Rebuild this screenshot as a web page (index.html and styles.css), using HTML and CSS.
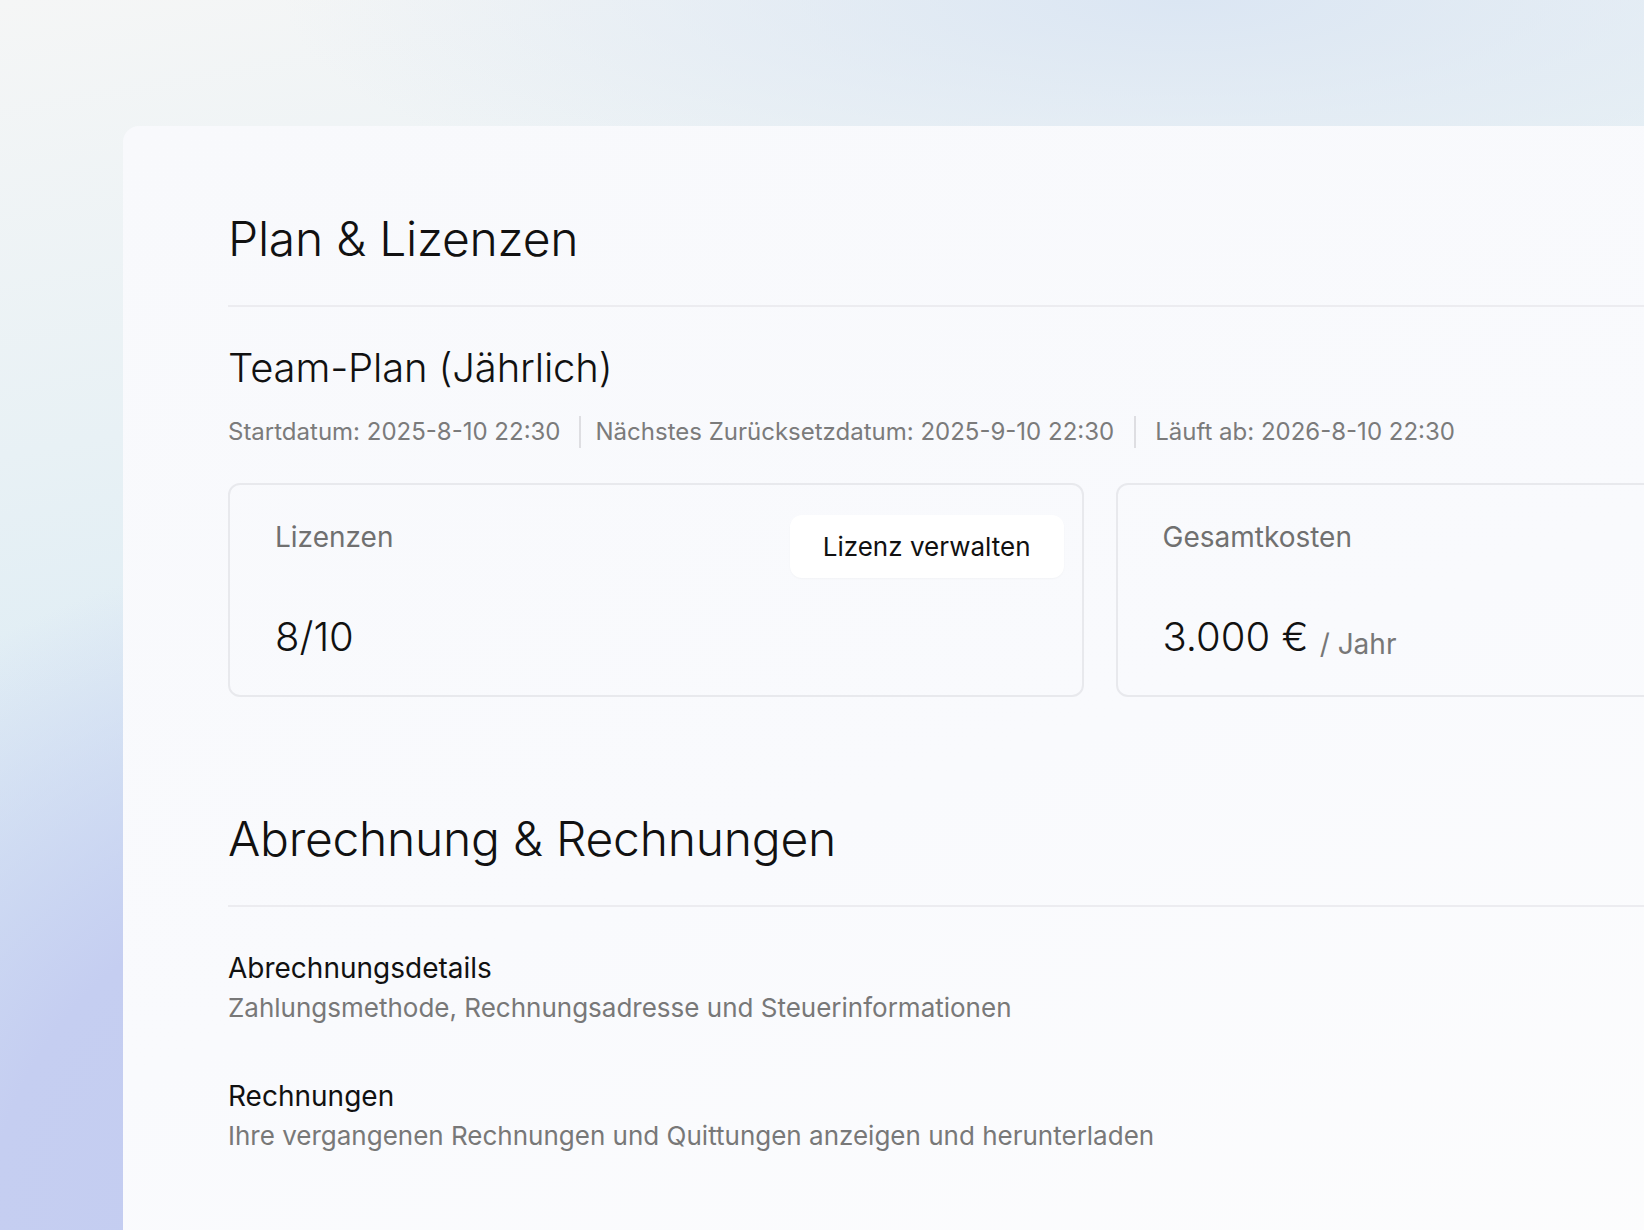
FILE: index.html
```html
<!DOCTYPE html>
<html lang="de">
<head>
<meta charset="UTF-8">
<meta name="viewport" content="width=device-width, initial-scale=1.0">
<title>Plan &amp; Lizenzen</title>
<link rel="stylesheet" href="styles.css">
</head>
<body>
<main class="panel">
    <section class="section">
        <h1 class="section-title">Plan &amp; Lizenzen</h1>
        <div class="plan">
            <h2 class="plan-name">Team-Plan (Jährlich)</h2>
            <ul class="plan-meta">
                <li>Startdatum: 2025-8-10 22:30</li>
                <li>Nächstes Zurücksetzdatum: 2025-9-10 22:30</li>
                <li>Läuft ab: 2026-8-10 22:30</li>
            </ul>
            <div class="stats">
                <div class="stat">
                    <div class="stat-head">
                        <span class="stat-label">Lizenzen</span>
                        <button class="btn">Lizenz verwalten</button>
                    </div>
                    <div class="stat-value">8/10</div>
                </div>
                <div class="stat">
                    <div class="stat-head">
                        <span class="stat-label">Gesamtkosten</span>
                    </div>
                    <div class="stat-value">3.000 € <span class="stat-unit">/ Jahr</span></div>
                </div>
            </div>
        </div>
    </section>

    <section class="section billing">
        <h1 class="section-title">Abrechnung &amp; Rechnungen</h1>
        <div class="billing-list">
            <div class="billing-item">
                <div class="billing-title">Abrechnungsdetails</div>
                <div class="billing-desc">Zahlungsmethode, Rechnungsadresse und Steuerinformationen</div>
            </div>
            <div class="billing-item">
                <div class="billing-title">Rechnungen</div>
                <div class="billing-desc">Ihre vergangenen Rechnungen und Quittungen anzeigen und herunterladen</div>
            </div>
        </div>
    </section>
</main>
</body>
</html>
```

FILE: styles.css
```css
html, body {
    height: 100%;
}
body {
    margin: 0;
    overflow: hidden;
    font-family: Inter, "Noto Sans", Arial, sans-serif;
    color: #141414;
    background:
        radial-gradient(ellipse 700px 680px at 340px 100%, #c3ccf1 0%, #c5cef1 50%, rgba(197,206,241,0) 100%),
        radial-gradient(ellipse 900px 240px at 72% 0%, #dbe6f3 0%, rgba(219,230,243,0) 100%),
        linear-gradient(170deg, #f5f6f6 0%, #e8f1f5 30%, #d9eaf4 60%, #d3e4f4 100%);
}
.panel {
    box-sizing: border-box;
    width: 1954px;
    height: 1200px;
    margin: 126px 0 0 123px;
    padding: 84px 106px 0 105px;
    background: linear-gradient(160deg, #f8f9fc 0%, #f9fafd 50%, #fdfdfd 100%);
    border-radius: 16px;
}
.section-title {
    margin: 0;
    padding-bottom: 37px;
    border-bottom: 2px solid #ececf0;
    font-size: 48px;
    line-height: 58px;
    font-weight: 300;
    letter-spacing: -0.25px;
    color: #111;
}
.plan {
    padding-top: 37px;
}
.plan-name {
    margin: 0;
    font-size: 40px;
    line-height: 48px;
    font-weight: 300;
    letter-spacing: -0.15px;
    color: #111;
}
.plan-meta {
    display: flex;
    margin: 24px 0 0;
    padding: 0;
    list-style: none;
    font-size: 24px;
    line-height: 32px;
    color: #7b7b7b;
}
.plan-meta li + li {
    margin-left: 18px;
    padding-left: 15px;
    border-left: 2px solid #dedee2;
}
.plan-meta li:last-child {
    margin-left: 20px;
    padding-left: 19px;
}
.stats {
    display: grid;
    grid-template-columns: 1fr 1fr;
    gap: 32px;
    margin-top: 35px;
}
.stat {
    box-sizing: border-box;
    display: flex;
    flex-direction: column;
    min-height: 214px;
    padding: 30px 18px 34px 45px;
    border: 2px solid #e8e9ed;
    border-radius: 12px;
}
.stat-head {
    display: flex;
    justify-content: space-between;
    align-items: flex-start;
}
.stat-label {
    margin-top: 1px;
    font-size: 28px;
    line-height: 42px;
    color: #707070;
}
.btn {
    padding: 12px 33px;
    border: none;
    border-radius: 12px;
    background-color: #fff;
    box-shadow: 0 1px 2px rgba(0,0,0,0.03);
    font-family: inherit;
    font-size: 26px;
    line-height: 39px;
    color: #111;
    cursor: pointer;
}
.stat-value {
    display: flex;
    align-items: flex-end;
    margin-top: auto;
    font-size: 40px;
    line-height: 48px;
    font-weight: 300;
    color: #111;
    white-space: pre;
}
.stat-unit {
    font-size: 28px;
    line-height: 34px;
    font-weight: 400;
    color: #777;
}
.billing {
    margin-top: 113px;
}
.billing-list {
    padding-top: 41px;
}
.billing-item + .billing-item {
    margin-top: 48px;
}
.billing-title {
    font-size: 28px;
    line-height: 40px;
    color: #111;
}
.billing-desc {
    font-size: 26px;
    line-height: 40px;
    color: #787878;
}
```
